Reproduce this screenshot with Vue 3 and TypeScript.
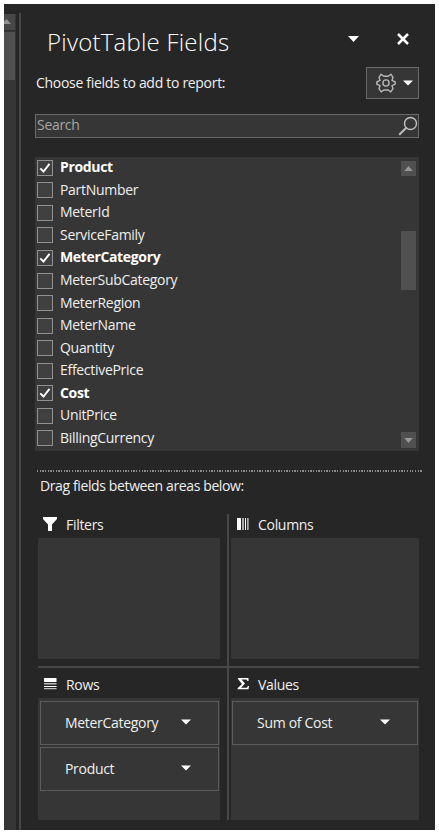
<script setup lang="ts">
import { ref } from 'vue'

interface Field {
  name: string
  checked: boolean
}

interface Area {
  id: 'filters' | 'columns' | 'rows' | 'values'
  label: string
  items: string[]
}

const checkedNames = ['Product', 'MeterCategory', 'Cost']
const fields = ref<Field[]>(
  [
    'Product', 'PartNumber', 'MeterId', 'ServiceFamily', 'MeterCategory',
    'MeterSubCategory', 'MeterRegion', 'MeterName', 'Quantity',
    'EffectivePrice', 'Cost', 'UnitPrice', 'BillingCurrency',
  ].map((name) => ({ name, checked: checkedNames.includes(name) })),
)

const areas: Area[] = [
  { id: 'filters', label: 'Filters', items: [] },
  { id: 'columns', label: 'Columns', items: [] },
  { id: 'rows', label: 'Rows', items: ['MeterCategory', 'Product'] },
  { id: 'values', label: 'Values', items: ['Sum of Cost'] },
]
</script>

<template>
  <div class="window">
    <div class="sheet-scroll">
      <div class="sheet-up"><svg width="9" height="5" viewBox="0 0 9 5"><path d="M0 5 4.500 0 9 5Z" fill="#929292" /></svg></div>
      <div class="sheet-thumb"></div>
    </div>
    <aside class="pane">
      <header class="head">
        <h1>PivotTable Fields</h1>
        <svg class="menu-arrow" width="11" height="6" viewBox="0 0 11 6"><path d="M0 0H11L5.500 6Z" fill="#fff" /></svg>
        <svg class="close" width="12" height="12" viewBox="0 0 12 12"><path d="M1 1 11 11M11 1 1 11" stroke="#fff" stroke-width="2.500" /></svg>
      </header>
      <div class="choose">
        <span>Choose fields to add to report:</span>
        <button class="tools" aria-label="Tools">
          <svg width="20" height="20" viewBox="0 0 20 20" fill="none" stroke="#b8b8b8" stroke-width="1.400" stroke-linejoin="round">
            <path d="M5.200 1.200 7.800 3.200H12.200L14.800 1.200 17 4.300 16 7.400 19.200 9V11.200L16 12.700 17 15.700 14.800 18.800 12.200 17H7.800L5.200 18.800 3 15.700 4 12.700 .8 11.200V9L4 7.400 3 4.300Z" />
            <circle cx="10" cy="10" r="3.100" />
          </svg>
          <svg width="10" height="6" viewBox="0 0 10 6"><path d="M0 .4H10L5 5.600Z" fill="#fff" /></svg>
        </button>
      </div>
      <div class="search">
        <span>Search</span>
        <svg width="20" height="20" viewBox="0 0 20 20" fill="none" stroke="#c0c0c0"><circle cx="12.500" cy="7.500" r="6" stroke-width="1.400" /><path d="M8.300 11.800 1.200 18.800" stroke-width="1.900" /></svg>
      </div>
      <section class="list">
        <div class="fields">
          <label v-for="f in fields" :key="f.name" class="field" :class="{ on: f.checked }">
            <span class="box" @click="f.checked = !f.checked">
              <svg v-if="f.checked" width="12" height="12" viewBox="0 0 12 12" fill="none"><path d="M1.300 6.300 4.500 9.500 10.500 1.800" stroke="#fff" stroke-width="1.900" /></svg>
            </span>
            <span class="name">{{ f.name }}</span>
          </label>
        </div>
        <div class="scroll">
          <div class="sbtn"><svg width="9" height="5" viewBox="0 0 10 6"><path d="M0 6 5 0 10 6Z" fill="#999" /></svg></div>
          <div class="thumb"></div>
          <div class="sbtn down"><svg width="9" height="5" viewBox="0 0 10 6"><path d="M0 0 5 6 10 0Z" fill="#999" /></svg></div>
        </div>
      </section>
      <div class="dots"></div>
      <p class="drag">Drag fields between areas below:</p>
      <section class="areas">
        <div v-for="a in areas" :key="a.id" class="area" :class="a.id">
          <h2>
            <svg v-if="a.id === 'filters'" width="14" height="14" viewBox="0 0 14 14"><path d="M0 0H14V2L9 7.500V14H5V7.500L0 2Z" fill="#fff" /></svg>
            <svg v-else-if="a.id === 'columns'" width="14" height="14" viewBox="0 0 14 14"><path d="M1 1H5V13H1ZM9 1H10V13H9Z" fill="#fff" /><path d="M6 1H8V13H6ZM11 1H12.700V13H11Z" fill="#aaa" /></svg>
            <svg v-else-if="a.id === 'rows'" width="14" height="14" viewBox="0 0 14 14"><path d="M1 1H13.500V5H1ZM1 9H13.500V10H1Z" fill="#fff" /><path d="M1 6H13.500V7.500H1ZM1 11H13.500V12.300H1Z" fill="#bbb" /></svg>
            <svg v-else width="14" height="14" viewBox="0 0 14 14"><path d="M2 1H12.500V4H11.300C11.200 2.800 10.700 2.500 9.500 2.500H5.500L9 6.600 5 10.800H9.700C11 10.800 11.500 10.300 11.800 9H13L12.500 12.300H1.600V11.300L6 7 2 2Z" fill="#fff" /></svg>
            <span>{{ a.label }}</span>
          </h2>
          <div class="drop">
            <div v-for="item in a.items" :key="item" class="item">
              <span>{{ item }}</span>
              <svg width="10" height="6" viewBox="0 0 10 6"><path d="M0 .4H10L5 5.600Z" fill="#fff" /></svg>
            </div>
          </div>
        </div>
      </section>
    </aside>
  </div>
</template>

<style>
body { background: #fff; }
</style>

<style scoped>
* { box-sizing: border-box; }
.window {
  display: flex;
  width: 431px;
  height: 826px;
  margin: 4px;
  background: #262626;
  color: #f0f0f0;
  font: 14px/20px "Open Sans", "Noto Sans", sans-serif;
  letter-spacing: -0.3px;
  overflow: hidden;
  white-space: nowrap;
}
svg { display: block; flex: none; }
.sheet-scroll { width: 12px; margin-top: 10px; background: #363636; flex: none; }
.sheet-up { height: 17px; width: 11px; padding: 5px 0 0 0; border-bottom: 1px solid #303030; background: #484848; }
.sheet-up svg { margin-left: -2px; }
.sheet-thumb { width: 11px; height: 48px; margin-top: 1px; background: #505050; }
.pane { width: 416px; margin: 9px 0 0 3px; border-left: 2px solid #484848; flex: none; }
.head { height: 49px; display: flex; padding-left: 26px; }
h1 { width: 301px; margin: 13px 0 0; font-size: 24px; font-weight: 300; line-height: 32px; letter-spacing: 0.22px; color: #fff; }
.menu-arrow { margin-top: 23px; }
.close { margin: 20px 0 0 38px; }
.choose { height: 52px; display: flex; justify-content: space-between; padding: 5px 16px 0 15px; }
.choose > span { margin-top: 6px; }
.tools {
  width: 53px; height: 32px; padding: 0 5px 0 9px; display: flex; align-items: center; justify-content: space-between;
  border: 1px solid #6a6a6a; background: #363636;
}
.tools svg:first-child { margin-top: -1px; }
.search { height: 24px; margin: 0 16px 0 14px; padding: 1px 0 0 1px; display: flex; justify-content: space-between; border: 1px solid #6a6a6a; background: #363636; color: #a6a6a6; }
.search span { margin-top: -1px; }
.list { height: 294px; margin: 19px 16px 0 14px; padding-right: 3px; display: flex; justify-content: space-between; background: #363636; }
.fields { display: grid; grid-template-rows: repeat(13, 22.55px); margin-top: -0.5px; }
.field { display: flex; align-items: center; gap: 7px; padding-left: 2px; }
.field.on { font-weight: 700; color: #fff; letter-spacing: -0.35px; }
.name { margin-top: -1px; }
.box { width: 16px; height: 16px; display: flex; align-items: center; justify-content: center; border: 1px solid #919191; background: #404040; }
.scroll { width: 15px; padding: 4px 0 3px; display: flex; flex-direction: column; }
.sbtn { height: 15px; display: flex; align-items: center; justify-content: center; background: #505050; }
.thumb { height: 59px; margin-top: 55px; background: #505050; }
.down { margin-top: auto; height: 16px; }
.dots { height: 2px; margin: 19px 12px 0 16px; background: repeating-linear-gradient(90deg, #8a8a8a 0 1.3px, #262626 1.3px 2.68px); }
.drag { margin: 4px 0 0 19px; height: 21px; line-height: 20px; letter-spacing: -0.38px; }
.areas { width: 381px; height: 306px; margin: 17px 0 0 17px; display: grid; grid-template-columns: 191px 190px; grid-template-rows: 154px 152px; }
.area { min-width: 0; }
.filters, .rows { border-right: 2px solid #484848; }
.filters, .columns { border-bottom: 2px solid #484848; }
.filters .drop, .rows .drop { width: 182px; }
.columns .drop, .values .drop { width: 188px; margin-left: 2px; }
h2 { height: 24px; margin: 0; padding: 0 0 2px 5px; display: flex; align-items: center; font-size: 14px; font-weight: 400; gap: 9px; }
.rows h2, .values h2 { height: 30px; padding: 4px 0 0 5px; }
.columns h2, .values h2 { gap: 8px; padding-left: 7px; }
h2 svg { margin-top: -2px; }
.drop { height: 121px; background: #363636; }
.rows .drop, .values .drop { height: 122px; padding: 3px 1px 0 2px; display: flex; flex-direction: column; gap: 2px; }
.values .drop { padding-left: 1px; }
.item { height: 44px; padding: 0 27px 0 24px; display: flex; align-items: center; justify-content: space-between; border: 1px solid #5c5c5c; }
.item svg { margin-top: -2px; }
.values .item { padding-right: 27px; }
</style>
